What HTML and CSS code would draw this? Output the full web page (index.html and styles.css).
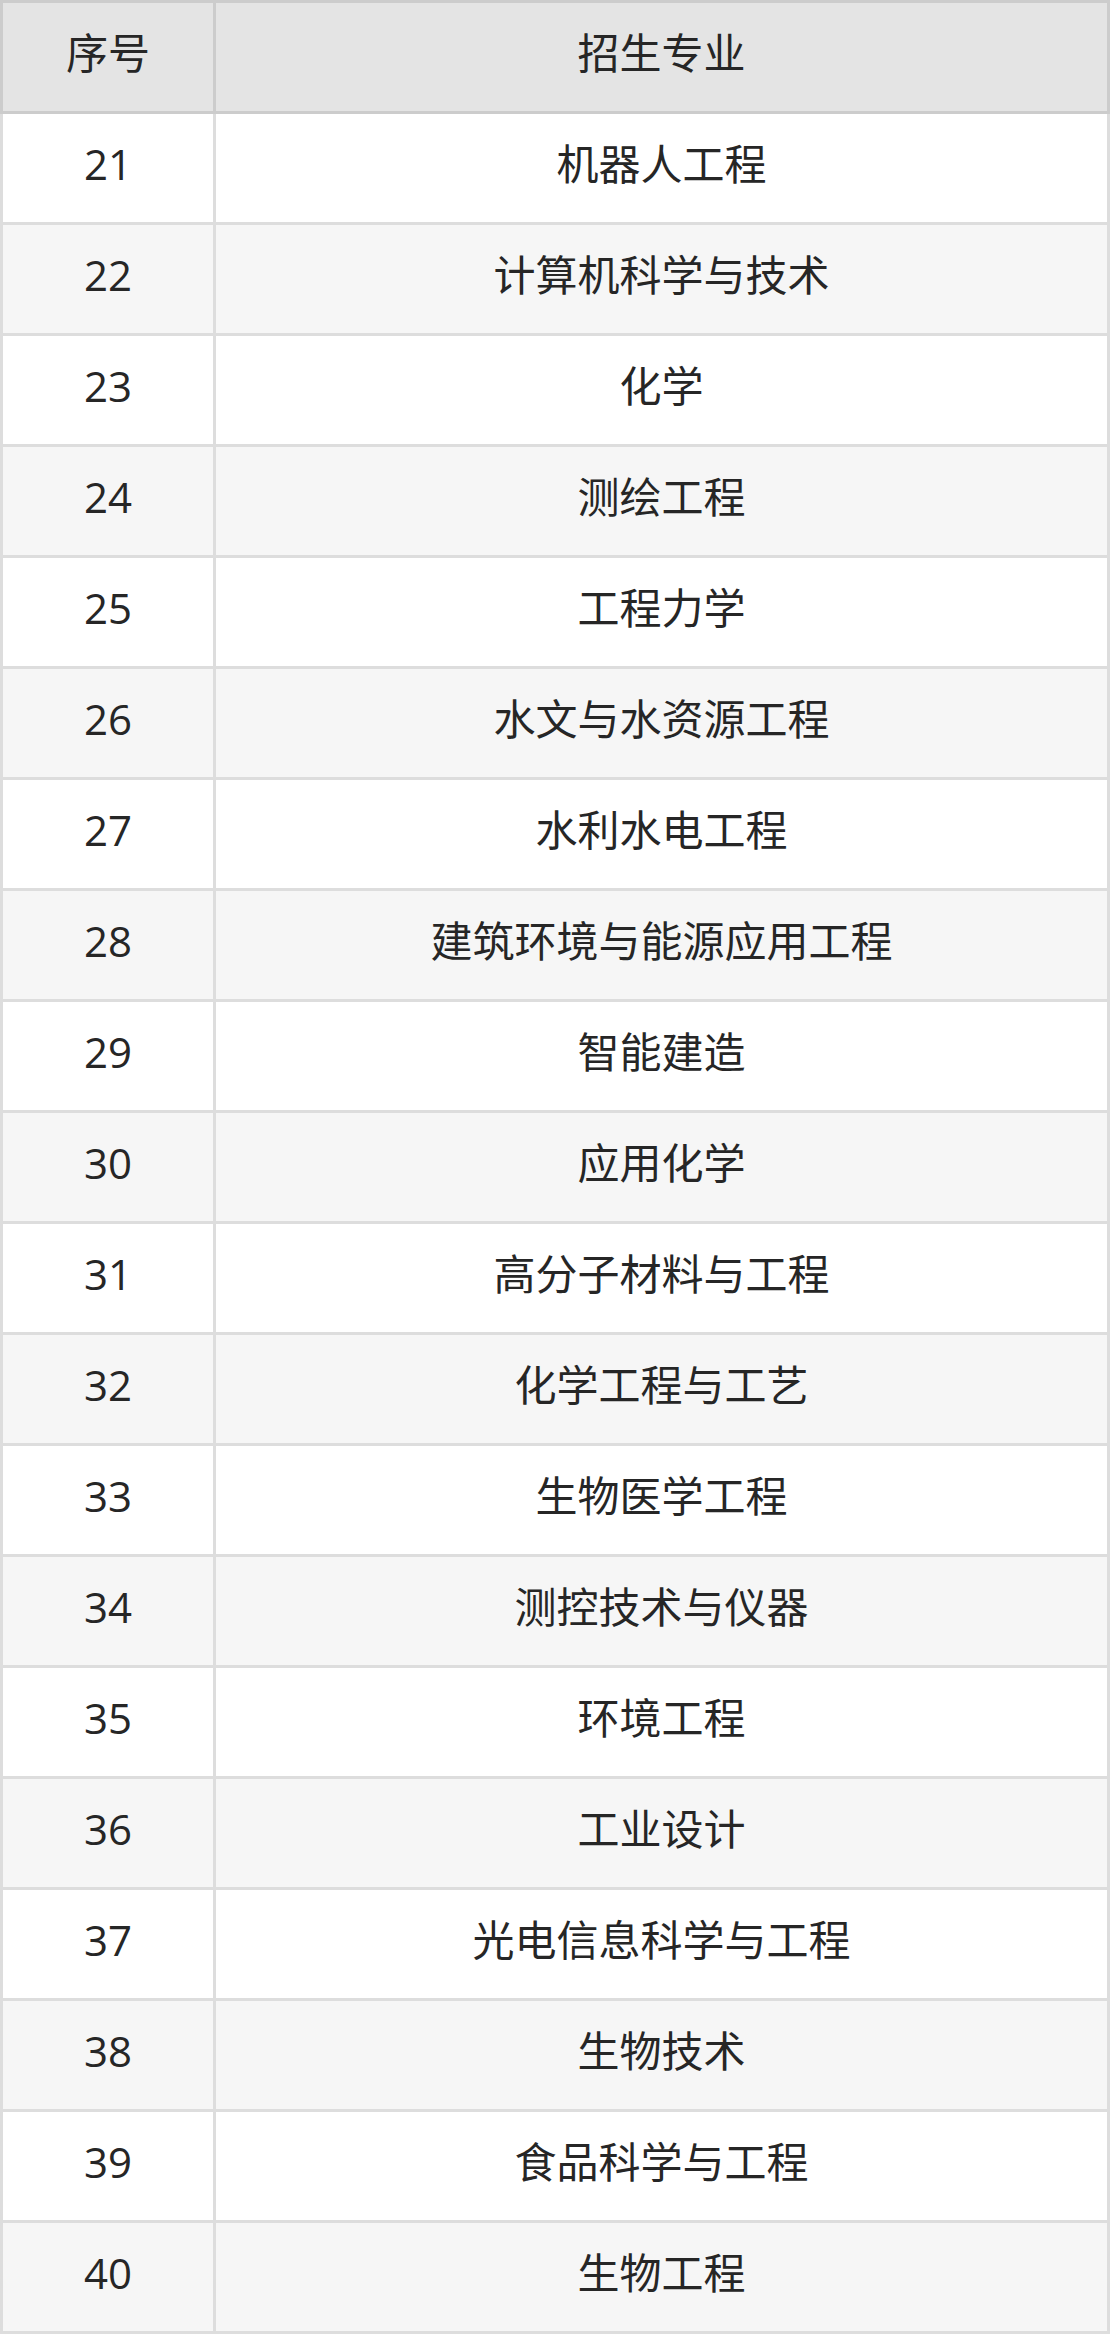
FILE: index.html
```html
<!DOCTYPE html>
<html lang="zh-CN">
<head>
<meta charset="utf-8">
<title>招生专业</title>
<link rel="stylesheet" href="styles.css">
</head>
<body>
<table class="major-table">
  <thead>
    <tr><th class="col-no">序号</th><th class="col-name">招生专业</th></tr>
  </thead>
  <tbody>
    <tr><td>21</td><td>机器人工程</td></tr>
    <tr><td>22</td><td>计算机科学与技术</td></tr>
    <tr><td>23</td><td>化学</td></tr>
    <tr><td>24</td><td>测绘工程</td></tr>
    <tr><td>25</td><td>工程力学</td></tr>
    <tr><td>26</td><td>水文与水资源工程</td></tr>
    <tr><td>27</td><td>水利水电工程</td></tr>
    <tr><td>28</td><td>建筑环境与能源应用工程</td></tr>
    <tr><td>29</td><td>智能建造</td></tr>
    <tr><td>30</td><td>应用化学</td></tr>
    <tr><td>31</td><td>高分子材料与工程</td></tr>
    <tr><td>32</td><td>化学工程与工艺</td></tr>
    <tr><td>33</td><td>生物医学工程</td></tr>
    <tr><td>34</td><td>测控技术与仪器</td></tr>
    <tr><td>35</td><td>环境工程</td></tr>
    <tr><td>36</td><td>工业设计</td></tr>
    <tr><td>37</td><td>光电信息科学与工程</td></tr>
    <tr><td>38</td><td>生物技术</td></tr>
    <tr><td>39</td><td>食品科学与工程</td></tr>
    <tr><td>40</td><td>生物工程</td></tr>
  </tbody>
</table>
</body>
</html>
```
FILE: styles.css
```css
html, body {
  margin: 0;
  padding: 0;
  background: #ffffff;
}

.major-table {
  width: 1110px;
  border-collapse: separate;
  border-spacing: 0;
  table-layout: fixed;
  font-family: "Open Sans", "Noto Sans CJK SC", sans-serif;
  font-size: 42px;
  color: #262626;
}

.major-table th,
.major-table td {
  box-sizing: border-box;
  height: 111px;
  padding: 0 0 8px 0;
  text-align: center;
  vertical-align: middle;
  font-weight: normal;
  line-height: 1.2;
  border-right: 3px solid #dddddd;
  border-bottom: 3px solid #dddddd;
}

.major-table th:first-child,
.major-table td:first-child {
  border-left: 3px solid #dddddd;
}

.major-table th {
  height: 114px;
  background: #e4e4e4;
  border-color: #cccccc;
  border-top: 3px solid #cccccc;
}

.major-table th:first-child {
  border-left-color: #cccccc;
}

.col-no {
  width: 216px;
}

.major-table tbody tr:nth-child(even) td {
  background: #f6f6f6;
}
```
